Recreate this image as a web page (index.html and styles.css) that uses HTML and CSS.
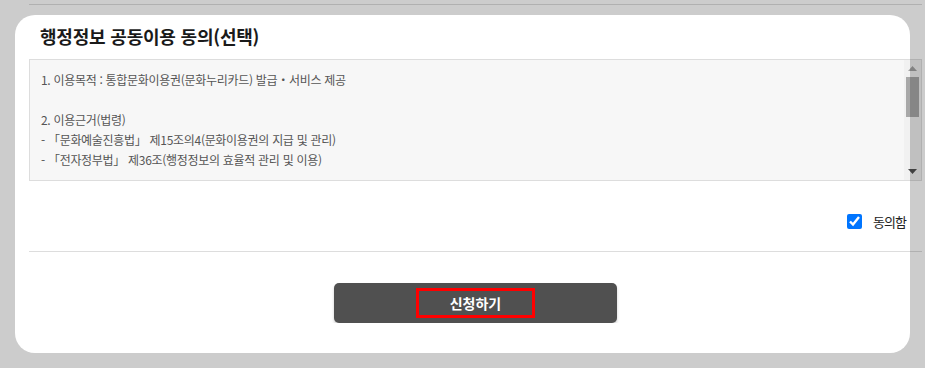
FILE: index.html
```html
<!DOCTYPE html>
<html lang="ko">
<head>
    <meta charset="UTF-8">
    <meta name="viewport" content="width=device-width, initial-scale=1.0">
    <title>행정정보 공동이용 동의</title>
    <link rel="stylesheet" href="styles.css">
</head>
<body>
    <div class="page">
        <section class="agree">
            <h2 class="agree-title">행정정보 공동이용 동의(선택)</h2>
            <div class="terms">
                <div class="terms-text">
                    <p>1. 이용목적 : 통합문화이용권(문화누리카드) 발급・서비스 제공</p>
                    <p>2. 이용근거(법령)<br>
                    - 「문화예술진흥법」 제15조의4(문화이용권의 지급 및 관리)<br>
                    - 「전자정부법」 제36조(행정정보의 효율적 관리 및 이용)</p>
                    <p>3. 이용정보 : 기초생활수급자 증명서, 차상위계층 확인서 등</p>
                    <p>4. 보유 및 이용기간 : 이용목적 달성 시까지</p>
                    <p>5. 동의를 거부할 권리가 있으며, 동의하지 않을 경우 구비서류를 직접 제출하여야 합니다.</p>
                </div>
                <div class="scrollbar">
                    <span class="sb-btn">
                        <svg width="9" height="5" viewBox="0 0 9 5"><path d="M0 5 L4.5 0 L9 5 Z" fill="#a3a3a3"/></svg>
                    </span>
                    <span class="sb-track"><span class="sb-thumb"></span></span>
                    <span class="sb-btn">
                        <svg width="9" height="5" viewBox="0 0 9 5"><path d="M0 0 L9 0 L4.5 5 Z" fill="#505050"/></svg>
                    </span>
                </div>
            </div>
            <label class="agree-check"><input type="checkbox" checked>동의함</label>
        </section>

        <div class="actions">
            <button class="btn-submit"><span class="focus-ring">신청하기</span></button>
        </div>
    </div>

    <div class="spotlight"></div>
</body>
</html>
```

FILE: styles.css
```css
body {
    margin: 0;
    background-color: #fff;
    font-family: "Noto Sans CJK KR", "Noto Sans", sans-serif;
    color: #222;
}
.page {
    padding: 0 3px 0 29px;
}
.agree {
    margin-top: 4px;
    border-top: 1px solid #ddd;
}
.agree-title {
    margin: 0;
    padding: 19px 0 10px 11px;
    font-size: 18px;
    line-height: 25px;
    font-weight: bold;
    letter-spacing: -0.2px;
    color: #1a1a1a;
}
.terms {
    display: flex;
    height: 122px;
    box-sizing: border-box;
    border: 1px solid #ddd;
    background-color: #f7f7f7;
}
.terms-text {
    flex: 1;
    padding: 10px 11px;
    overflow: hidden;
    font-size: 12px;
    line-height: 20px;
    letter-spacing: -0.3px;
    color: #555;
}
.terms-text p {
    margin: 0 0 20px;
}
.scrollbar {
    width: 17px;
    display: flex;
    flex-direction: column;
    background-color: #f1f1f1;
}
.sb-btn {
    height: 17px;
    display: flex;
    align-items: center;
    justify-content: center;
}
.sb-btn svg {
    display: block;
}
.sb-track {
    flex: 1;
}
.sb-thumb {
    display: block;
    height: 40px;
    margin: 0 2px;
    background-color: #a8a8a8;
}
.agree-check {
    display: flex;
    justify-content: flex-end;
    align-items: center;
    height: 20px;
    padding: 30px 16px 20px 0;
    font-size: 13px;
    letter-spacing: -1px;
    color: #222;
}
.agree-check input {
    width: 15px;
    height: 15px;
    margin: 0 11px 0 0;
}
.actions {
    border-top: 1px solid #ddd;
    padding-top: 31px;
    text-align: center;
}
.btn-submit {
    width: 283px;
    height: 40px;
    border: none;
    border-radius: 5px;
    background-color: #505050;
    color: #fff;
    font-family: inherit;
    font-size: 14px;
    font-weight: bold;
    box-shadow: 0 2px 3px rgba(0, 0, 0, 0.2);
    cursor: pointer;
}
.focus-ring {
    display: inline-block;
    padding: 4px 31px 3px;
    line-height: 17px;
    border: 3px solid #f00;
}
.spotlight {
    position: absolute;
    left: 15px;
    top: 15px;
    width: 895px;
    height: 338px;
    border-radius: 20px;
    box-shadow: 0 0 0 1000px rgba(0, 0, 0, 0.2);
    pointer-events: none;
}
```
